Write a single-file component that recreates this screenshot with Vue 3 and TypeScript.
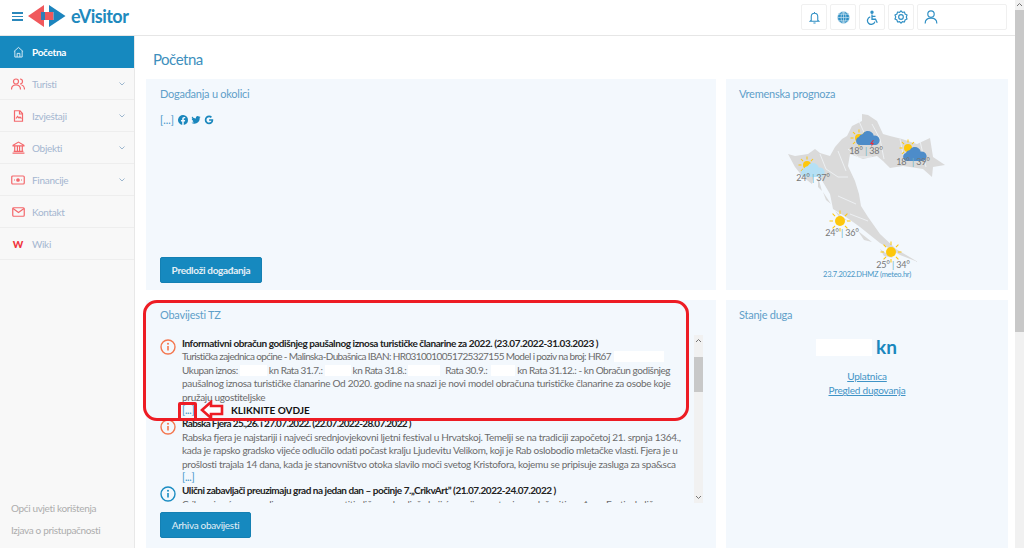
<script setup lang="ts">
interface NavItem { label: string; icon: string; chevron: boolean }
const nav: NavItem[] = [
  { label: 'Turisti', icon: 'people', chevron: true },
  { label: 'Izvještaji', icon: 'doc', chevron: true },
  { label: 'Objekti', icon: 'bank', chevron: true },
  { label: 'Financije', icon: 'money', chevron: true },
  { label: 'Kontakt', icon: 'mail', chevron: false },
  { label: 'Wiki', icon: 'wiki', chevron: false },
]
const rays = [0, 45, 90, 135, 180, 225, 270, 315]
const suns = [
  { x: 840, y: 222, r: 5, a: 7, b: 10.5 },
  { x: 891, y: 253, r: 5, a: 7, b: 10.5 },
  { x: 807, y: 166, r: 4, a: 5.5, b: 8.5 },
  { x: 859, y: 139, r: 4, a: 5.5, b: 8.5 },
  { x: 908, y: 149, r: 4, a: 5.5, b: 8.5 },
]
const clouds = [
  { x: 813, y: 171, c: '#b5e0f5' },
  { x: 868, y: 139, c: '#4d8cc9' },
  { x: 915, y: 155, c: '#4d8cc9' },
]
const temps = [
  { x: 866, y: 155, a: '18°', b: '38°' },
  { x: 913, y: 166, a: '18°', b: '39°' },
  { x: 813, y: 182, a: '24°', b: '37°' },
  { x: 842, y: 237, a: '24°', b: '36°' },
  { x: 893, y: 269, a: '25°', b: '34°' },
]
const counties = 'M848 150 L858 158 L872 158 M872 125 L880 140 L884 160 M900 140 L905 165 M826 170 L838 178 L848 178 M838 197 L856 205 M850 215 L868 222 M838 152 L846 172 M858 120 L866 138 M920 142 L926 168 M820 155 L826 170'
</script>

<template>
  <div class="app">
    <div class="page">
      <header class="top">
        <div class="brand">
          <span class="burger"><i></i><i></i><i></i></span>
          <svg class="logo" width="38" height="24" viewBox="28 4 38 24">
            <path d="M28 16 44 5v7h-3v8h3v7z" fill="#f0585c" />
            <path d="M41 12h4.500v8H41z" fill="#2f7fb8" />
            <path d="M45 12h8.500v8H45z" fill="#f0585c" />
            <path d="M49 5l16.500 11L49 27v-7h4.500v-8H49z" fill="#1c84bd" />
          </svg>
          <span class="wordmark">eVisitor</span>
        </div>
        <div class="tools">
          <button class="tool">
            <svg width="13" height="13" viewBox="0 0 24 24" fill="none" stroke="#2f8fc4" stroke-width="2"><path d="M6 17V10a6 6 0 0 1 12 0v7l2 2H4zM10 22h4M12 2v2" /></svg>
          </button>
          <button class="tool">
            <svg width="13" height="13" viewBox="0 0 24 24" fill="#2f8fc4" stroke="#cfe6f3" stroke-width="1.200"><circle cx="12" cy="12" r="11" /><path d="M1 12h22M12 1v22M3 6h18M3 18h18M12 1c-6 6-6 16 0 22M12 1c6 6 6 16 0 22" fill="none" /></svg>
          </button>
          <button class="tool">
            <svg width="14" height="15" viewBox="0 0 24 24" fill="none" stroke="#2f8fc4" stroke-width="2.200"><circle cx="12" cy="3" r="1.800" fill="#2f8fc4" /><path d="M12 7v8h6l3 6M12 10h6M9 11a6.500 6.500 0 1 0 8 8" /></svg>
          </button>
          <button class="tool">
            <svg width="14" height="14" viewBox="0 0 24 24" fill="none" stroke="#2f8fc4" stroke-width="2"><circle cx="12" cy="12" r="4" /><path d="M12 1.500l2.500 2.600 3.500-.6 1 3.500 3.300 1.500-1.200 3.500 1.200 3.500-3.300 1.500-1 3.500-3.500-.6L12 22.500l-2.500-2.600-3.500.6-1-3.500-3.300-1.500L3 12 1.700 8.500 5 7l1-3.500 3.500.6z" /></svg>
          </button>
          <button class="tool user">
            <svg width="14" height="14" viewBox="0 0 24 24" fill="none" stroke="#2f8fc4" stroke-width="2"><circle cx="12" cy="7" r="5.500" /><path d="M2 23c0-6 4-9 10-9s10 3 10 9" /></svg>
          </button>
        </div>
      </header>

      <div class="body">
        <aside class="side">
          <div class="nav-item active">
            <span class="nav-icon"><svg width="11" height="12" viewBox="0 0 24 24" fill="none" stroke="#e4f1f8" stroke-width="2"><path d="M2 11 12 2l10 9M4 10v13h16V10M9 23v-8h6v8" /></svg></span>
            <span class="nav-label">Početna</span>
          </div>
          <div v-for="item in nav" :key="item.label" class="nav-item">
            <span class="nav-icon">
              <svg v-if="item.icon === 'people'" width="14" height="12" viewBox="0 0 28 24" fill="none" stroke="#f4686c" stroke-width="2.400"><circle cx="10" cy="7" r="5" /><path d="M1 23c0-6 3-9 9-9s9 3 9 9M18 2a5 5 0 0 1 0 10M21 14c4 1 6 4 6 9" /></svg>
              <svg v-else-if="item.icon === 'doc'" width="11" height="12" viewBox="0 0 20 24" fill="none" stroke="#f4686c" stroke-width="2.400"><path d="M13 1.500H2v21h16V7zM12 1.500V8h6" /><path d="M5 17l3-4 3 3 2-2 3 3" /></svg>
              <svg v-else-if="item.icon === 'bank'" width="13" height="13" viewBox="0 0 24 24" fill="none" stroke="#f4686c" stroke-width="2.200"><path d="M2 8 12 2l10 6v1H2zM5 10v9M10 10v9M14 10v9M19 10v9M3 19h18M1 22.500h22" /></svg>
              <svg v-else-if="item.icon === 'money'" width="14" height="10" viewBox="0 0 28 20" fill="none" stroke="#f4686c" stroke-width="2.400"><rect x="1.500" y="2" width="25" height="16" rx="2" /><circle cx="14" cy="10" r="2.500" fill="#f4686c" /><path d="M6 10h2M20 10h2" /></svg>
              <svg v-else-if="item.icon === 'mail'" width="13" height="10" viewBox="0 0 26 20" fill="none" stroke="#f4686c" stroke-width="2.400"><rect x="1.500" y="1.500" width="23" height="17" rx="2" /><path d="M2 3l11 8 11-8" /></svg>
              <b v-else class="wiki">W</b>
            </span>
            <span class="nav-label">{{ item.label }}</span>
            <svg v-if="item.chevron" class="chev" width="6" height="4" viewBox="0 0 6 4" fill="none" stroke="#9db7cf" stroke-width="1"><path d="M.5.500 3 3 5.500.500" /></svg>
          </div>
          <div class="side-foot">
            <a>Opći uvjeti korištenja</a>
            <a>Izjava o pristupačnosti</a>
          </div>
        </aside>

        <main class="main">
          <h1 class="page-title">Početna</h1>
          <div class="grid">
            <section class="card events">
              <h2 class="card-title">Događanja u okolici</h2>
              <div class="socials">
                <a class="more">[...]</a>
                <svg width="10" height="10" viewBox="0 0 24 24" fill="#1a87bd"><path d="M24 12a12 12 0 1 0-13.900 11.900v-8.400H7.100V12h3V9.400c0-3 1.800-4.700 4.500-4.700 1.300 0 2.700.2 2.700.2v3h-1.500c-1.500 0-2 .9-2 1.900V12h3.400l-.5 3.500h-2.900v8.400A12 12 0 0 0 24 12z" /></svg>
                <svg width="10" height="10" viewBox="0 0 24 24" fill="#1a87bd"><path d="M23 4.900c-.8.400-1.700.6-2.600.7.900-.6 1.700-1.400 2-2.500-.9.500-1.900.9-2.900 1.100A4.500 4.500 0 0 0 11.800 8.300 12.900 12.900 0 0 1 2.500 3.600a4.500 4.500 0 0 0 1.400 6c-.7 0-1.400-.2-2-.6 0 2.200 1.500 4 3.600 4.500-.7.2-1.400.2-2 .1.600 1.800 2.200 3.100 4.200 3.100A9.100 9.100 0 0 1 1 18.600a12.900 12.900 0 0 0 19.900-11.500c.9-.6 1.600-1.400 2.100-2.200z" /></svg>
                <svg width="10" height="10" viewBox="0 0 24 24" fill="#1a87bd"><path d="M12.200 10v4h5.700c-.5 2.300-2.500 4-5.700 4-3.400 0-6.200-2.800-6.200-6.200s2.800-6.300 6.200-6.300c1.700 0 3 .6 4 1.500l3-3C17.400 2.300 15 1.200 12.200 1.200 6.400 1.200 1.800 5.900 1.800 11.800s4.600 10.500 10.400 10.500c6 0 10-4.200 10-10.100 0-.8-.1-1.500-.2-2.200z" /></svg>
              </div>
              <div class="grow"></div>
              <button class="btn">Predloži događanja</button>
            </section>

            <section class="card weather">
              <h2 class="card-title">Vremenska prognoza</h2>
              <svg class="map" width="282" height="180" viewBox="726 100 282 180">
                <path fill="#dadada" d="M788 155 795 157 808 155 815 150 820 154 830 157 835 148 842 140 847 137 852 127 862 122 862 115 868 116 877 122 883 135 890 137 902 140 917 145 930 139 933 158 945 166 933 168 932 178 923 170 910 168 903 167 890 169 883 162 877 157 863 160 850 155 848 167 855 182 859 195 861 207 868 218 880 235 896 250 918 263 900 256 880 244 860 228 846 218 833 210 830 195 820 178 815 168 812 185 803 178 795 168z" />
                <path fill="#dadada" d="M823 193 831 205 826 201zM835 212 848 222 840 219zM858 232 872 243 864 241zM880 250 893 259 884 257zM818 178 822 192 818 188z" />
                <path :d="counties" fill="none" stroke="#f1f5f9" stroke-width=".8" />
                <g v-for="(s, i) in suns" :key="i">
                  <circle :cx="s.x" :cy="s.y" :r="s.r" fill="#fdc70c" />
                  <line v-for="a in rays" :key="a" :x1="s.x + s.a" :y1="s.y" :x2="s.x + s.b" :y2="s.y" stroke="#fdc70c" stroke-width="1" :transform="`rotate(${a} ${s.x} ${s.y})`" />
                </g>
                <path v-for="c in clouds" :key="c.x" :fill="c.c" :transform="`translate(${c.x} ${c.y}) scale(1.150)`" d="M-7 6a3.500 3.500 0 0 1-1-6.800 4 4 0 0 1 3.500-2.700A5 5 0 0 1 3-5a4 4 0 0 1 2 3 3.500 3.500 0 0 1 2 8z" />
                <path d="M873 141l-3 4h2l-1 3 3-4h-2l2-3z" fill="#ee2a38" />
                <text v-for="t in temps" :key="t.x" class="temp" :x="t.x" :y="t.y" text-anchor="middle">{{ t.a }} <tspan fill="#6fb3c4">|</tspan> {{ t.b }}</text>
              </svg>
              <div class="caption">23.7.2022.DHMZ (meteo.hr)</div>
            </section>

            <section class="card notices">
              <h2 class="card-title">Obavijesti TZ</h2>
              <div class="notice-wrap">
                <div class="notice-list">
                  <article class="notice">
                    <svg class="info" width="16" height="16" viewBox="0 0 16 16"><circle cx="8" cy="8" r="7" fill="none" stroke="#f4774f" stroke-width="1.400" /><circle cx="8" cy="4.800" r="1" fill="#f4774f" /><path d="M8 7v4.500" stroke="#f4774f" stroke-width="1.600" /></svg>
                    <div>
                      <p class="n-title">Informativni obračun godišnjeg paušalnog iznosa turističke članarine za 2022. (23.07.2022-31.03.2023 )</p>
                      <p class="ln tighter">Turistička zajednica općine - Malinska-Dubašnica IBAN: HR0310010051725327155 Model i poziv na broj: HR67<span class="redact w50"></span></p>
                      <p class="ln tight">Ukupan iznos:<span class="redact w28"></span>kn Rata 31.7.:<span class="redact w27"></span>kn Rata 31.8.:<span class="redact w34"></span>Rata 30.9.:<span class="redact w25"></span>kn Rata 31.12.: - kn Obračun godišnjeg</p>
                      <p class="ln">paušalnog iznosa turističke članarine Od 2020. godine na snazi je novi model obračuna turističke članarine za osobe koje</p>
                      <p class="ln">pružaju ugostiteljske</p>
                      <p class="ln"><a class="more">[...]</a></p>
                    </div>
                  </article>
                  <article class="notice">
                    <svg class="info" width="16" height="16" viewBox="0 0 16 16"><circle cx="8" cy="8" r="7" fill="none" stroke="#f4774f" stroke-width="1.400" /><circle cx="8" cy="4.800" r="1" fill="#f4774f" /><path d="M8 7v4.500" stroke="#f4774f" stroke-width="1.600" /></svg>
                    <div>
                      <p class="n-title rab">Rabska Fjera 25.,26. i 27.07.2022. (22.07.2022-28.07.2022 )</p>
                      <p class="ln">Rabska fjera je najstariji i najveći srednjovjekovni ljetni festival u Hrvatskoj. Temelji se na tradiciji započetoj 21. srpnja 1364.,</p>
                      <p class="ln">kada je rapsko gradsko vijeće odlučilo odati počast kralju Ljudevitu Velikom, koji je Rab oslobodio mletačke vlasti. Fjera je u</p>
                      <p class="ln">prošlosti trajala 14 dana, kada je stanovništvo otoka slavilo moći svetog Kristofora, kojemu se pripisuje zasluga za spa&amp;sca</p>
                      <p class="ln"><a class="more">[...]</a></p>
                    </div>
                  </article>
                  <article class="notice">
                    <svg class="info" width="16" height="16" viewBox="0 0 16 16"><circle cx="8" cy="8" r="7" fill="none" stroke="#1a8cc2" stroke-width="1.400" /><circle cx="8" cy="4.800" r="1" fill="#1a8cc2" /><path d="M8 7v4.500" stroke="#1a8cc2" stroke-width="1.600" /></svg>
                    <div>
                      <p class="n-title uli">Ulični zabavljači preuzimaju grad na jedan dan – počinje 7.„CrikvArt” (21.07.2022-24.07.2022 )</p>
                      <p class="ln">Crikvenica će ove godine ponovno ugostiti ulične zabavljače koji će svojim nastupima oduševiti građane. Festival ulične</p>
                    </div>
                  </article>
                </div>
                <div class="mini-bar">
                  <svg width="9" height="22" viewBox="0 0 9 22" fill="none" stroke="#777" stroke-width="1"><path d="M2 7l2.500-2.500L7 7" /></svg>
                  <span class="mini-thumb"></span>
                  <span class="grow"></span>
                  <svg width="9" height="10" viewBox="0 0 9 10" fill="none" stroke="#777" stroke-width="1"><path d="M2 3l2.500 2.500L7 3" /></svg>
                </div>
              </div>
              <button class="btn archive">Arhiva obavijesti</button>

              <div class="callout"></div>
              <div class="callout-small"></div>
              <svg class="callout-arrow" width="24" height="20" viewBox="0 0 24 20" fill="#fff" stroke="#ed1c24" stroke-width="2.600"><path d="M2 10 11 2v4h11v8H11v4z" /></svg>
              <strong class="callout-text">KLIKNITE OVDJE</strong>
            </section>

            <section class="card debt">
              <h2 class="card-title">Stanje duga</h2>
              <div class="amount"><span class="redact-big"></span><span class="kn">kn</span></div>
              <a class="debt-link">Uplatnica</a>
              <a class="debt-link">Pregled dugovanja</a>
            </section>
          </div>
        </main>
      </div>
    </div>
    <div class="page-bar">
      <svg width="9" height="10" viewBox="0 0 9 10" fill="none" stroke="#777" stroke-width="1"><path d="M2 6l2.500-2.500L7 6" /></svg>
      <span class="page-thumb"></span>
    </div>
  </div>
</template>

<style>
html, body { margin: 0; overflow: hidden; background: #fff; }
</style>

<style scoped>
.app {
  display: flex;
  width: 1024px;
  height: 548px;
  overflow: hidden;
  font-family: "Lato", "Noto Sans", sans-serif;
  background: #fff;
}
.page { width: 1015px; display: flex; flex-direction: column; }
.page-bar { width: 9px; background: #f1f1f1; display: flex; flex-direction: column; }
.page-thumb { display: block; height: 322px; background: #c8c8c8; }

.top {
  flex: none;
  display: flex;
  justify-content: space-between;
  border-bottom: 1px solid #e6e6e6;
  padding: 4px 8px 0 12px;
  height: 31px;
}
.brand { display: flex; align-items: center; height: 24px; }
.burger { display: flex; flex-direction: column; gap: 2px; width: 11px; margin-right: 5px; margin-top: 1px; }
.burger i { display: block; height: 1.500px; background: #2b88bb; }
.logo { flex: none; }
.wordmark { font-size: 18px; font-weight: 700; letter-spacing: -.5px; color: #2089bd; margin-left: 5px; }
.tools { display: flex; gap: 3px; }
.tool {
  width: 26px;
  height: 26px;
  padding: 0;
  background: #fff;
  border: 1px solid #f0f0f0;
  border-radius: 2px;
  display: flex;
  align-items: center;
  justify-content: center;
}
.tool.user { width: 90px; justify-content: flex-start; padding-left: 6px; }

.body { flex: 1; display: flex; min-height: 0; }
.side {
  width: 134px;
  flex: none;
  background: #f8f8f8;
  border-right: 1px solid #e8e8e8;
  display: flex;
  flex-direction: column;
}
.nav-item {
  height: 32px;
  flex: none;
  box-sizing: border-box;
  border-bottom: 1px solid #eeeeee;
  display: flex;
  align-items: center;
  padding-left: 11px;
}
.nav-item.active { background: #1689bf; border-bottom: 0; }
.nav-icon { width: 14px; display: flex; justify-content: center; margin-right: 7px; flex: none; }
.nav-label { font-size: 10px; letter-spacing: -.3px; color: #a4b6d0; }
.active .nav-label { color: #fff; font-weight: 700; }
.chev { margin-left: auto; margin-right: 9px; }
.wiki { font-size: 10px; color: #f0343c; font-weight: 900; line-height: 1; }
.side-foot {
  margin-top: auto;
  display: flex;
  flex-direction: column;
  gap: 9px;
  padding: 0 11px 11px;
  font-size: 10px;
  letter-spacing: -.35px;
  line-height: 13px;
  color: #adadad;
}

.main { flex: 1; padding: 0 7px 0 11px; min-width: 0; }
.page-title {
  margin: 0;
  height: 43px;
  padding-left: 7px;
  font-size: 15px;
  letter-spacing: -.5px;
  line-height: 46px;
  font-weight: 400;
  color: #3e8fbd;
}
.grid { display: grid; grid-template-columns: 570px 282px; grid-template-rows: 211px 248px; gap: 10px; }
.card { background: #f3f8fd; padding: 0 14px; display: flex; flex-direction: column; position: relative; min-width: 0; }
.card-title { margin: 0; padding-top: 8px; font-size: 11px; line-height: 13px; font-weight: 400; letter-spacing: -.25px; color: #5f9fc9; }
.grow { flex: 1; }
.socials { display: flex; align-items: center; gap: 3px; margin-top: 14px; height: 12px; }
.more { font-size: 10.500px; color: #3d95c8; }
.socials .more { margin-right: 1px; }
.btn {
  align-self: flex-start;
  height: 26px;
  padding: 0 12px;
  background: #1689bf;
  color: #e4eff6;
  border: 1px solid #1480b3;
  border-radius: 2px;
  font-family: inherit;
  font-size: 10px;
  letter-spacing: -.3px;
  font-weight: 700;
}
.events .btn { width: 102px; padding: 0; margin-bottom: 7px; }
.archive { width: 91px; padding: 0; margin-top: 9px; font-weight: 400; }

.weather { padding: 0 13px; }
.map { margin: -1px -13px 0; display: block; flex: none; }
.temp { font-size: 9px; letter-spacing: -.2px; fill: #777; }
.caption { text-align: center; font-size: 7.500px; letter-spacing: -.25px; line-height: 10px; color: #4a97c6; margin-top: -9px; }

.notice-wrap { display: flex; height: 168px; margin-top: 14px; margin-right: -1px; }
.notice-list { width: 534px; overflow: hidden; padding-top: 2px; box-sizing: border-box; }
.notice { display: flex; gap: 6px; }
.info { flex: none; margin-top: 2px; }
.notice > div { min-width: 0; }
.n-title, .ln { margin: 0; font-size: 10px; line-height: 13.400px; white-space: nowrap; }
.n-title { font-weight: 700; letter-spacing: -.42px; color: #222; }
.n-title.rab { letter-spacing: -.64px; }
.n-title.uli { letter-spacing: -.47px; }
.ln { color: #6b6b6b; letter-spacing: -.3px; }
.ln.tight { letter-spacing: -.45px; }
.ln.tighter { letter-spacing: -.62px; }
.redact { display: inline-block; background: #fff; height: 11px; vertical-align: -2px; }
.w50 { width: 50px; margin-left: 3px; }
.w28 { width: 27px; margin: 0 2px; }
.w27 { width: 26px; margin: 0 2px; }
.w34 { width: 32px; margin: 0 5px 0 2px; }
.w25 { width: 24px; margin: 0 2px 0 4px; }
.mini-bar { width: 9px; background: #f1f1f1; display: flex; flex-direction: column; }
.mini-thumb { display: block; height: 35px; background: #c8c8c8; }

.callout {
  position: absolute;
  left: -3px;
  top: 0;
  width: 546px;
  height: 121px;
  box-sizing: border-box;
  border: 3px solid #ed1c24;
  border-radius: 14px;
  pointer-events: none;
}
.callout-small {
  position: absolute;
  left: 32px;
  top: 102px;
  width: 19px;
  height: 19px;
  box-sizing: border-box;
  border: 3px solid #ed1c24;
  border-radius: 2px;
}
.callout-arrow { position: absolute; left: 54px; top: 100px; }
.callout-text { position: absolute; left: 85px; top: 103px; font-size: 10px; line-height: 14px; color: #111; font-weight: 700; }

.debt { align-items: center; padding: 0; }
.debt .card-title { align-self: flex-start; padding-left: 13px; }
.amount { display: flex; align-items: center; gap: 4px; margin: 15px 21px 11px 0; height: 22px; }
.redact-big { display: block; width: 56px; height: 17px; background: #fff; }
.kn { font-size: 19px; font-weight: 700; color: #1a87bd; line-height: 22px; }
.debt-link { font-size: 10px; letter-spacing: -.2px; line-height: 14px; color: #3f93c6; text-decoration: underline; }
</style>
